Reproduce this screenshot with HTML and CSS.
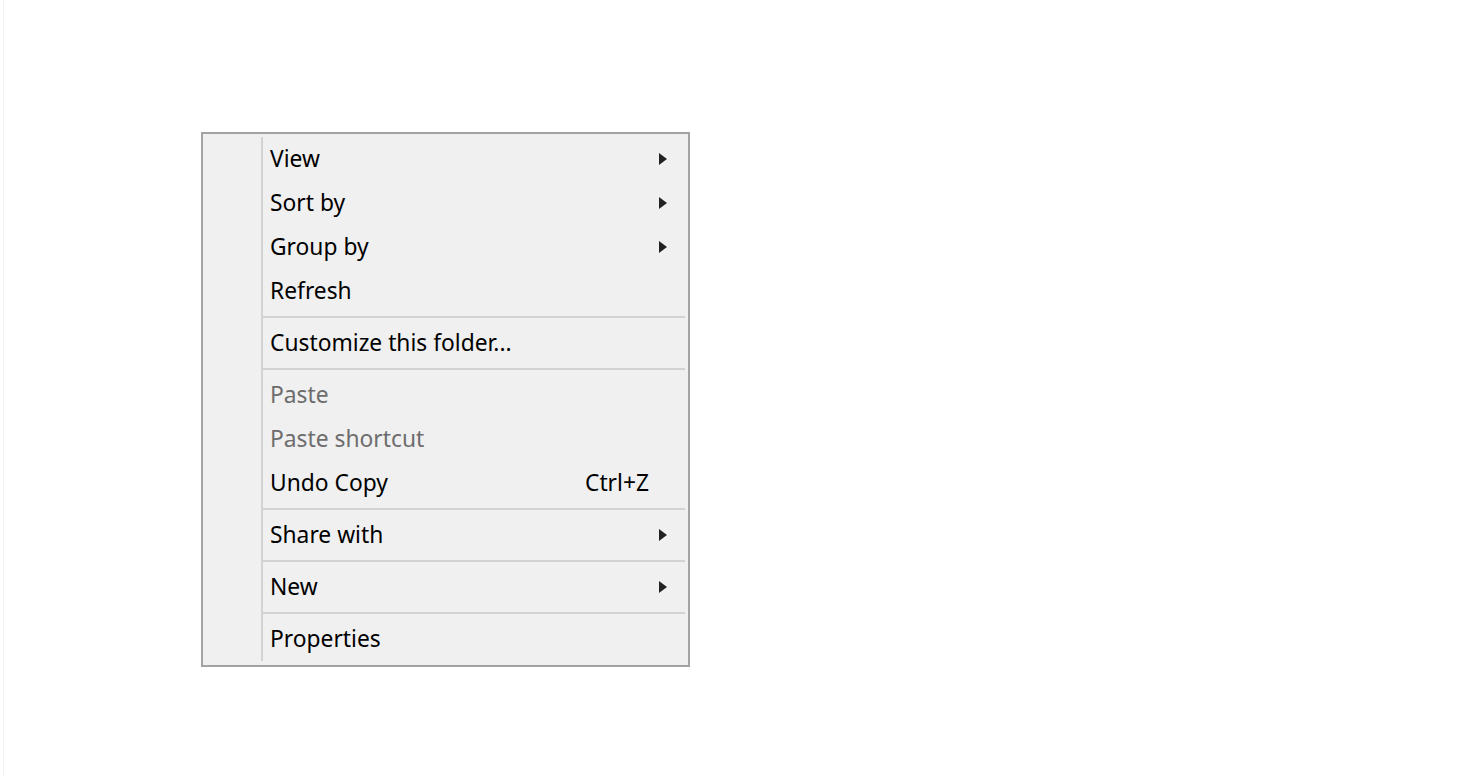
FILE: index.html
```html
<!DOCTYPE html>
<html lang="en">
<head>
<meta charset="utf-8">
<title>Context menu</title>
<link rel="stylesheet" href="styles.css">
</head>
<body>
<div class="desktop">
  <div class="menu">
    <div class="gutter"></div>
    <ul class="items">
      <li class="item"><span class="label">View</span><span class="arrow"></span></li>
      <li class="item"><span class="label">Sort by</span><span class="arrow"></span></li>
      <li class="item"><span class="label">Group by</span><span class="arrow"></span></li>
      <li class="item"><span class="label">Refresh</span></li>
      <li class="sep"></li>
      <li class="item"><span class="label">Customize this folder...</span></li>
      <li class="sep"></li>
      <li class="item disabled"><span class="label">Paste</span></li>
      <li class="item disabled"><span class="label">Paste shortcut</span></li>
      <li class="item"><span class="label">Undo Copy</span><span class="shortcut">Ctrl+Z</span></li>
      <li class="sep"></li>
      <li class="item"><span class="label">Share with</span><span class="arrow"></span></li>
      <li class="sep"></li>
      <li class="item"><span class="label">New</span><span class="arrow"></span></li>
      <li class="sep"></li>
      <li class="item"><span class="label">Properties</span></li>
    </ul>
  </div>
</div>
</body>
</html>
```
FILE: styles.css
```css
html, body {
  margin: 0;
  padding: 0;
  background: #ffffff;
}

body {
  font-family: "Noto Sans", "Open Sans", "Liberation Sans", sans-serif;
  height: 776px;
  overflow: hidden;
}

.desktop {
  margin-left: 3px;
  height: 776px;
  border-left: 1px solid #f3f3f3;
  padding-top: 132px;
  padding-left: 197px;
  box-sizing: border-box;
}

.menu {
  display: flex;
  width: 489px;
  box-sizing: border-box;
  background: #f0f0f0;
  border: 2px solid #a3a3a3;
  padding: 3px 3px 4px 0;
}

.gutter {
  width: 58px;
  flex: none;
}

.items {
  list-style: none;
  margin: 0;
  padding: 0;
  flex: 1;
  border-left: 2px solid #d2d2d2;
}

.item {
  height: 44px;
  box-sizing: border-box;
  display: flex;
  align-items: center;
  padding-left: 7px;
  font-size: 22.8px;
  color: #000000;
}

.item .label,
.item .shortcut {
  position: relative;
  top: -1px;
}

.item.disabled {
  color: #6d6d6d;
}

.label {
  flex: 1;
  white-space: nowrap;
}

.shortcut {
  margin-right: 36px;
  white-space: nowrap;
}

.arrow {
  width: 0;
  height: 0;
  border-top: 6px solid transparent;
  border-bottom: 6px solid transparent;
  border-left: 8px solid #222222;
  margin-right: 18px;
}

.sep {
  height: 8px;
  display: flex;
  align-items: center;
}

.sep::before {
  content: "";
  display: block;
  width: 100%;
  height: 2px;
  background: #d2d2d2;
}
```
